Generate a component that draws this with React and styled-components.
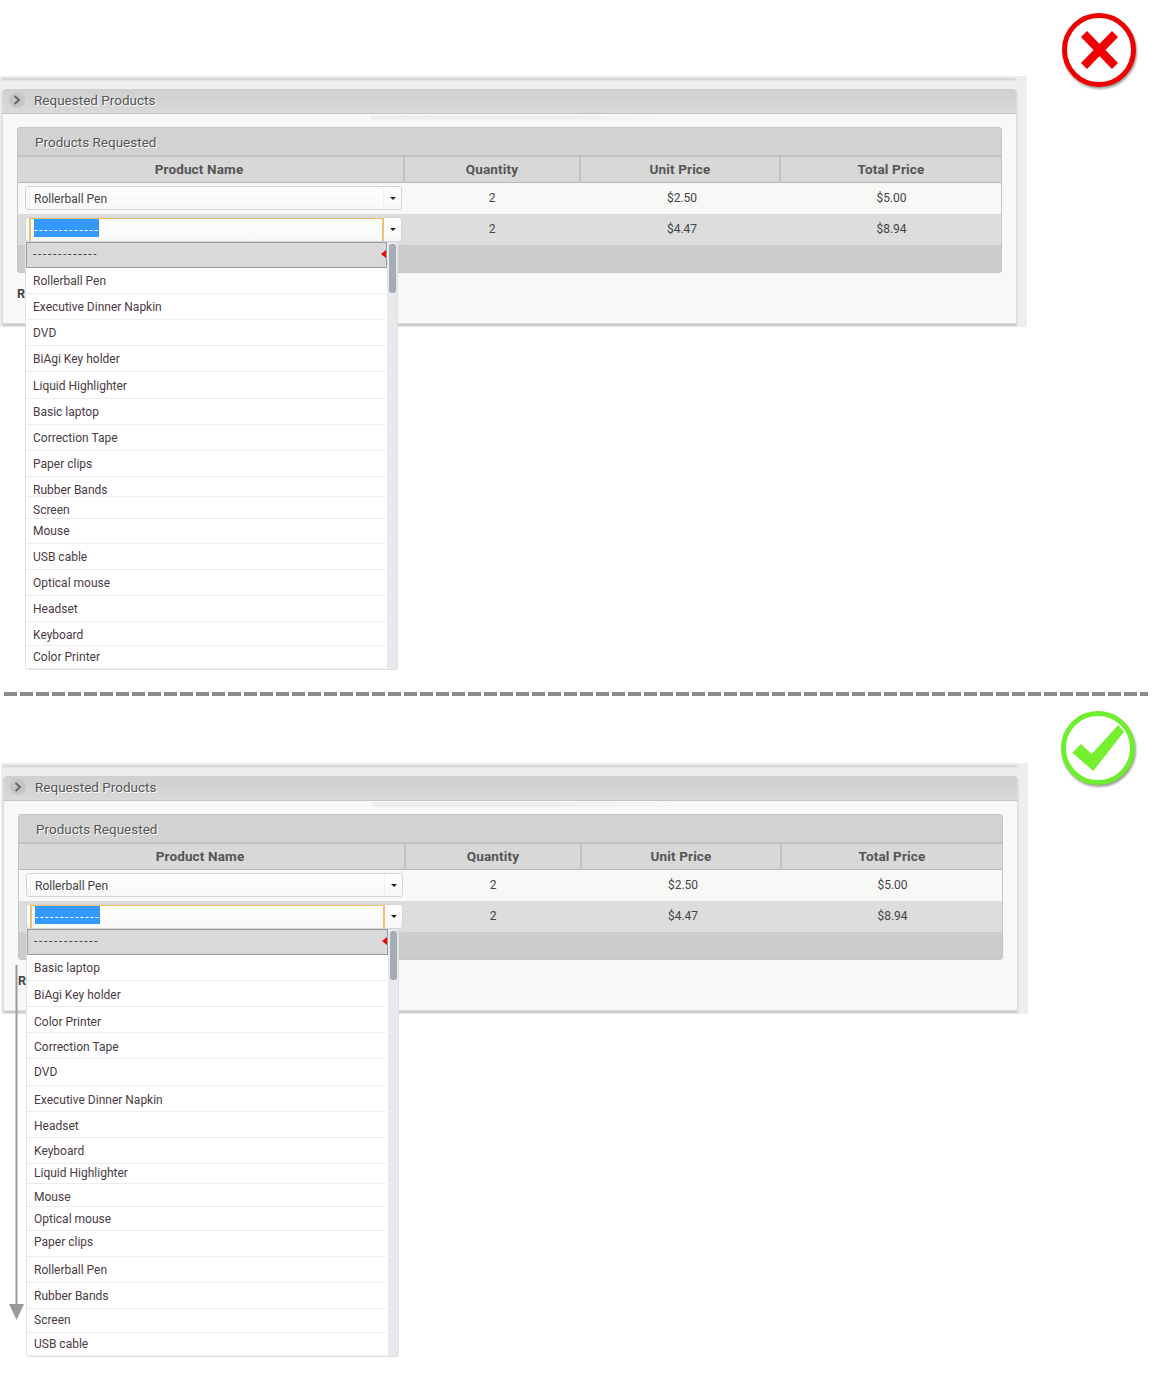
import React from "react";
import styled, { createGlobalStyle } from "styled-components";

const GlobalStyle = createGlobalStyle`
  html, body {
    margin: 0;
    background: #fff;
    font-family: Roboto, "Noto Sans", sans-serif;
    color: #444;
  }
`;

const Page = styled.div`
  width: 1162px;
  height: 1378px;
  overflow: hidden;
`;

const Section = styled.section`
  display: flex;
  align-items: flex-start;
  height: ${({ $height }) => $height}px;
  padding-left: ${({ $left }) => $left}px;
  box-sizing: border-box;
`;

const Divider = styled.div`
  margin-left: 4px;
  width: 1144px;
  height: 4px;
  background: repeating-linear-gradient(to right, #8a8a8a 0 13px, transparent 13px 16px);
  box-shadow: 0 5px 3px -3px #ececec;
`;

const Backdrop = styled.div`
  position: relative;
  flex: none;
  width: 1027px;
  height: 251px;
  margin-top: ${({ $top }) => $top}px;
  padding: 2px 10px 4px 2px;
  box-sizing: border-box;
  background: #eeeeee;
`;

const TopEdge = styled.div`
  height: 0;
  border-bottom: 1px solid #d8d8d8;
  margin-right: 1px;
  border-radius: 0 0 6px 6px;
  box-shadow: 0 1px 2px #bdbdbd;
`;

const Card = styled.div`
  margin-top: 10px;
  height: 235px;
  width: 1015px;
  box-sizing: border-box;
  background: #f8f8f6;
  border: 1px solid #dcdcdc;
  border-top: none;
  border-radius: 3px 3px 2px 2px;
  box-shadow: 0 2px 2px #c4c4c4;
`;

const CardHeader = styled.header`
  display: flex;
  align-items: center;
  gap: 9px;
  height: 25px;
  padding: 0 0 2px 6px;
  box-sizing: border-box;
  background: linear-gradient(#cfcfcf, #d9d9d9);
  border-bottom: 1px solid #c4c4c4;
  border-radius: 3px 3px 0 0;
  color: #555;
  font-size: 13.5px;
  text-shadow: 1px 1px 0 #fff;
`;

const Toggle = styled.span`
  display: flex;
  align-items: center;
  justify-content: center;
  width: 16px;
  height: 16px;
  border-radius: 50%;
  background: #c6c6c6;
  color: #666;
`;

const Shine = styled.div`
  height: 5px;
  margin: 1px 325px 0 368px;
  background: linear-gradient(to right, #eeeeee, #efefef 60%, transparent);
`;

const Group = styled.div`
  margin: 7px 14px 0 14px;
  height: 146px;
  width: 985px;
  display: flex;
  flex-direction: column;
  border-radius: 3px;
  background: #cccccc;
  border: 1px solid #c6c6c6;
  box-sizing: border-box;
`;

const GroupTitle = styled.div`
  display: flex;
  align-items: center;
  height: 27px;
  padding: 1px 0 0 17px;
  box-sizing: border-box;
  flex: none;
  background: #d2d2d2;
  color: #555;
  font-size: 13.5px;
  text-shadow: 1px 1px 0 #fff;
`;

const Columns = styled.div`
  display: grid;
  grid-template-columns: 387px 176px 200px 220px;
  height: ${({ $height }) => $height}px;
  background: ${({ $bg }) => $bg};
  flex: none;
`;

const HeadCell = styled.div`
  display: flex;
  align-items: center;
  justify-content: center;
  padding: 0 ${({ $shift }) => $shift || 0}px 2px 0;
  background: #d8d8d8;
  border-top: 2px solid #c2c2c2;
  border-right: 2px solid #c2c2c2;
  border-bottom: 1px solid #b8b8b8;
  color: #555;
  font-size: 13.5px;
  font-weight: 700;
  letter-spacing: 0.15px;
  &:last-child {
    border-right: none;
  }
`;

const Cell = styled.div`
  display: flex;
  align-items: center;
  justify-content: center;
  padding: 0 ${({ $shift }) => $shift || 0}px 2px ${({ $push }) => $push || 0}px;
  box-sizing: border-box;
  color: #444;
  font-size: 12px;
`;

const ComboCell = styled.div`
  padding: ${({ $top }) => $top}px 0 0 7px;
`;

const Combo = styled.div`
  position: relative;
  display: flex;
  width: 377px;
  height: ${({ $height }) => $height}px;
  box-sizing: border-box;
  background: linear-gradient(#ffffff, #f7f7f7);
  border: 1px solid #d4d4d4;
  border-radius: 3px;
  font-size: 12px;
`;

const ComboInput = styled.div`
  flex: 1;
  display: flex;
  align-items: ${({ $active }) => ($active ? "flex-start" : "center")};
  margin-left: 3px;
  padding: ${({ $active }) => ($active ? "0 0 0 3px" : "2px 0 0 4px")};
  color: #444;
  border-style: solid;
  border-color: ${({ $active }) => ($active ? "#efc272" : "#f0f0f0")};
  border-width: ${({ $active }) => ($active ? "1px 2px 0 2px" : "0 1px")};
`;

const Dashes = styled.span`
  letter-spacing: 1.7px;
  white-space: pre;
`;

const Selection = styled(Dashes)`
  display: block;
  width: 65px;
  height: 18px;
  line-height: 22px;
  background: #3399ff;
  color: #fff;
  overflow: hidden;
`;

const ComboArrow = styled.div`
  flex: none;
  width: 17px;
  display: flex;
  align-items: center;
  justify-content: center;
  &::before {
    content: "";
    border: 3px solid transparent;
    border-top: 3px solid #222;
    border-bottom: none;
  }
`;

const Dropdown = styled.div`
  position: absolute;
  top: calc(100% + 1px);
  left: -1px;
  width: 373px;
  display: flex;
  background: #fff;
  border: 1px solid #e0e0e0;
  border-top: none;
  border-radius: 0 0 3px 3px;
  box-sizing: border-box;
  z-index: 3;
`;

const ListBody = styled.ul`
  list-style: none;
  margin: 0;
  padding: 0;
  flex: 1;
  min-width: 0;
`;

const ActiveOption = styled.li`
  position: relative;
  display: flex;
  align-items: center;
  height: 26px;
  padding: 0 0 2px 6px;
  box-sizing: border-box;
  background: #d9d9d9;
  border: 1px solid #9c9c9c;
  color: #444;
  font-size: 12px;
  &::after {
    content: "";
    position: absolute;
    right: 0;
    top: 7px;
    border: 4px solid transparent;
    border-right: 5px solid #f00000;
    border-left: none;
  }
`;

const Option = styled.li`
  display: flex;
  align-items: flex-end;
  height: ${({ $height }) => $height}px;
  padding: 0 0 ${({ $gap }) => $gap - 6}px 7px;
  margin-right: 2px;
  box-sizing: border-box;
  border-bottom: 1px solid #ededed;
  color: #4a3a44;
  font-size: 12px;
  line-height: 12px;
`;

const Scrollbar = styled.div`
  flex: none;
  width: 10px;
  background: #e8e9ec;
  padding: 2px 1px 0 2px;
  box-sizing: border-box;
`;

const ScrollThumb = styled.div`
  height: 49px;
  border-radius: 3px;
  background: #a5acb5;
`;

const FieldLabel = styled.div`
  margin: 13px 0 0 14px;
  font-size: 12.5px;
  font-weight: 700;
  color: #444;
`;

const Badge = styled.svg`
  flex: none;
  margin: ${({ $top }) => $top}px 0 0 ${({ $left }) => $left}px;
  filter: drop-shadow(1px 2px 1px rgba(0, 0, 0, 0.4));
`;

const SortArrow = styled.svg`
  position: absolute;
  left: 8px;
  top: 202px;
  z-index: 4;
`;

const firstList = [
  ["Rollerball Pen", 26, 12],
  ["Executive Dinner Napkin", 26, 12],
  ["DVD", 26, 12],
  ["BiAgi Key holder", 26, 12],
  ["Liquid Highlighter", 27, 12],
  ["Basic laptop", 26, 12],
  ["Correction Tape", 26, 12],
  ["Paper clips", 26, 12],
  ["Rubber Bands", 20, 6],
  ["Screen", 22, 8],
  ["Mouse", 25, 12],
  ["USB cable", 26, 12],
  ["Optical mouse", 26, 12],
  ["Headset", 26, 12],
  ["Keyboard", 24, 10],
  ["Color Printer", 23, 11],
];

const secondList = [
  ["Basic laptop", 26, 12],
  ["BiAgi Key holder", 26, 11],
  ["Color Printer", 26, 10],
  ["Correction Tape", 26, 11],
  ["DVD", 27, 13],
  ["Executive Dinner Napkin", 26, 11],
  ["Headset", 26, 11],
  ["Keyboard", 26, 12],
  ["Liquid Highlighter", 20, 10],
  ["Mouse", 23, 9],
  ["Optical mouse", 24, 11],
  ["Paper clips", 26, 14],
  ["Rollerball Pen", 26, 12],
  ["Rubber Bands", 26, 12],
  ["Screen", 24, 12],
  ["USB cable", 23, 11],
];

const dashes = "-------------";

const RedCross = () => (
  <Badge $top={13} $left={35} width="75" height="75" viewBox="0 0 75 75">
    <circle cx="37" cy="37" r="34.5" fill="#fff" stroke="#ef0000" strokeWidth="5" />
    <path d="M22 21 L53 53 M53 21 L22 53" stroke="#f00000" strokeWidth="8.5" fill="none" />
  </Badge>
);

const GreenCheck = () => (
  <Badge $top={15} $left={32} width="77" height="75" viewBox="0 0 77 75">
    <circle cx="38" cy="37" r="34.5" fill="#fff" stroke="#6fee2e" strokeWidth="5" />
    <path d="M12.3 41.7 L21 33 L31.7 43 L58.3 14 L64 20.7 L33.3 60 Z" fill="#74f02f" />
  </Badge>
);

const ProductsPanel = ({ top, list, withArrow }) => (
  <Backdrop $top={top}>
    <TopEdge />
    <Card>
      <CardHeader>
        <Toggle>
          <svg width="8" height="10" viewBox="0 0 8 10">
            <path d="M1.5 1 L6 5 L1.5 9" fill="none" stroke="#666" strokeWidth="2" />
          </svg>
        </Toggle>
        Requested Products
      </CardHeader>
      <Shine />
      <Group>
        <GroupTitle>Products Requested</GroupTitle>
        <Columns $height={28}>
          <HeadCell $shift={23}>Product Name</HeadCell>
          <HeadCell>Quantity</HeadCell>
          <HeadCell>Unit Price</HeadCell>
          <HeadCell>Total Price</HeadCell>
        </Columns>
        <Columns $height={31} $bg="#f8f8f6">
          <ComboCell $top={3}>
            <Combo $height={24}>
              <ComboInput>Rollerball Pen</ComboInput>
              <ComboArrow />
            </Combo>
          </ComboCell>
          <Cell $shift={2}>2</Cell>
          <Cell $push={2}>$2.50</Cell>
          <Cell $push={1}>$5.00</Cell>
        </Columns>
        <Columns $height={31} $bg="#dddddd">
          <ComboCell $top={3}>
            <Combo $height={25}>
              <ComboInput $active>
                <Selection>{dashes}</Selection>
              </ComboInput>
              <ComboArrow />
              <Dropdown>
                <ListBody>
                  <ActiveOption>
                    <Dashes>{dashes}</Dashes>
                  </ActiveOption>
                  {list.map(([label, height, gap]) => (
                    <Option key={label} $height={height} $gap={gap}>
                      {label}
                    </Option>
                  ))}
                </ListBody>
                <Scrollbar>
                  <ScrollThumb />
                </Scrollbar>
              </Dropdown>
            </Combo>
          </ComboCell>
          <Cell $shift={2}>2</Cell>
          <Cell $push={2}>$4.47</Cell>
          <Cell $push={1}>$8.94</Cell>
        </Columns>
      </Group>
      <FieldLabel>R</FieldLabel>
    </Card>
    {withArrow && (
      <SortArrow width="16" height="356" viewBox="0 0 16 356">
        <rect x="6.5" y="0" width="2" height="342" fill="#9a9a9a" />
        <path d="M0 339 H15 L7.5 355 Z" fill="#9a9a9a" />
      </SortArrow>
    )}
  </Backdrop>
);

export default function App() {
  return (
    <Page>
      <GlobalStyle />
      <Section $height={692} $left={0}>
        <ProductsPanel top={76} list={firstList} />
        <RedCross />
      </Section>
      <Divider />
      <Section $height={682} $left={1}>
        <ProductsPanel top={67} list={secondList} withArrow />
        <GreenCheck />
      </Section>
    </Page>
  );
}
